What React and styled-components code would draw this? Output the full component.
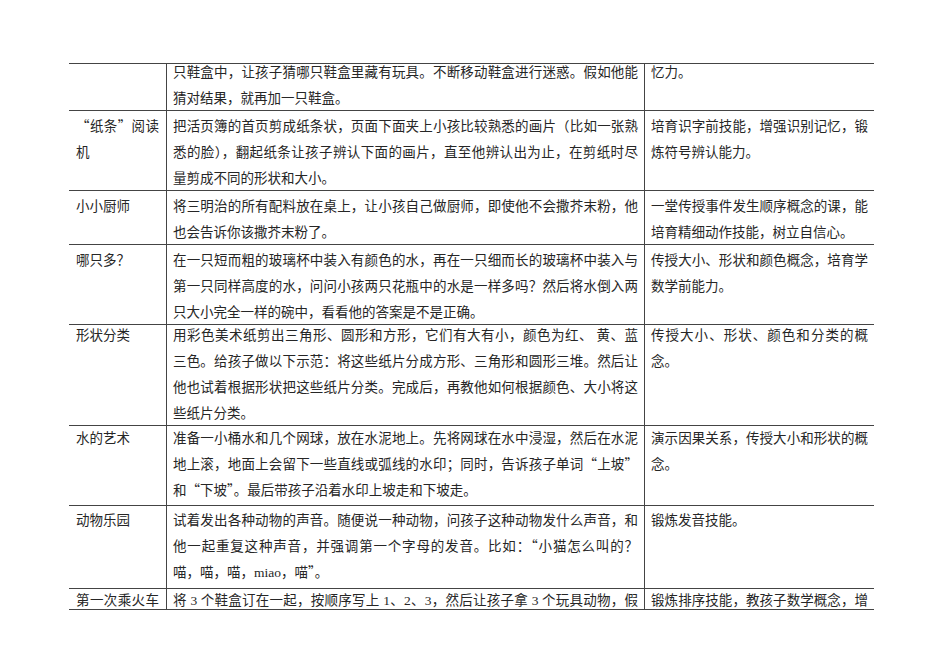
import React from 'react';
import styled, { createGlobalStyle } from 'styled-components';

const GlobalStyle = createGlobalStyle`
  html, body {
    margin: 0;
    padding: 0;
    background: #ffffff;
  }
  body {
    font-family: "Noto Sans CJK SC", "Liberation Serif", sans-serif;
    color: #262626;
  }
`;

const Page = styled.div`
  width: 950px;
  height: 672px;
  box-sizing: border-box;
  padding: 63px 0 0 69px;
  overflow: hidden;
  background: #fff;
`;

const Table = styled.div`
  width: 805px;
  border-top: 1px solid #444;
`;

const Row = styled.div`
  display: grid;
  grid-template-columns: 97px 478px 230px;
  border-bottom: 1px solid #444;
`;

const Cell = styled.div`
  box-sizing: border-box;
  padding: 0 ${(p) => (p.$first ? 7 : 6)}px;
  border-left: ${(p) => (p.$first ? 'none' : '1px solid #444')};
  font-size: 13.5px;
  line-height: 26px;
  min-width: 0;
`;

const Text = styled.div`
  margin-top: ${(p) => p.$shift}px;
  margin-bottom: ${(p) => p.$tail}px;
`;

const Line = styled.div`
  text-align: justify;
  text-align-last: ${(p) => (p.$full ? 'justify' : 'left')};
`;

// latin runs are set in Times in the original document
const Lat = styled.span`
  font-family: "Liberation Serif", serif;
`;

const rows = [
  {
    shift: -6,
    name: [],
    method: [
      '只鞋盒中，让孩子猜哪只鞋盒里藏有玩具。不断移动鞋盒进行迷惑。假如他能',
      '猜对结果，就再加一只鞋盒。',
    ],
    aim: ['忆力。'],
  },
  {
    shift: 1,
    name: ['“纸条”阅读', '机'],
    method: [
      '把活页簿的首页剪成纸条状，页面下面夹上小孩比较熟悉的画片（比如一张熟',
      '悉的脸），翻起纸条让孩子辨认下面的画片，直至他辨认出为止，在剪纸时尽',
      '量剪成不同的形状和大小。',
    ],
    aim: ['培育识字前技能，增强识别记忆，锻', '炼符号辨认能力。'],
  },
  {
    shift: 1,
    name: ['小小厨师'],
    method: [
      '将三明治的所有配料放在桌上，让小孩自己做厨师，即使他不会撒芥末粉，他',
      '也会告诉你该撒芥末粉了。',
    ],
    aim: ['一堂传授事件发生顺序概念的课，能', '培育精细动作技能，树立自信心。'],
  },
  {
    shift: 1,
    name: ['哪只多？'],
    method: [
      '在一只短而粗的玻璃杯中装入有颜色的水，再在一只细而长的玻璃杯中装入与',
      '第一只同样高度的水，问问小孩两只花瓶中的水是一样多吗？然后将水倒入两',
      '只大小完全一样的碗中，看看他的答案是不是正确。',
    ],
    aim: ['传授大小、形状和颜色概念，培育学', '数学前能力。'],
  },
  {
    shift: -4,
    name: ['形状分类'],
    method: [
      '用彩色美术纸剪出三角形、圆形和方形，它们有大有小，颜色为红、 黄、蓝',
      '三色。给孩子做以下示范：将这些纸片分成方形、三角形和圆形三堆。然后让',
      '他也试着根据形状把这些纸片分类。完成后，再教他如何根据颜色、大小将这',
      '些纸片分类。',
    ],
    aim: ['传授大小、形状、颜色和分类的概', '念。'],
  },
  {
    shift: -2,
    tail: 3,
    name: ['水的艺术'],
    method: [
      '准备一小桶水和几个网球，放在水泥地上。先将网球在水中浸湿，然后在水泥',
      '地上滚，地面上会留下一些直线或弧线的水印；同时，告诉孩子单词“上坡”',
      '和“下坡”。最后带孩子沿着水印上坡走和下坡走。',
    ],
    aim: ['演示因果关系，传授大小和形状的概', '念。'],
  },
  {
    shift: 0,
    tail: 2,
    name: ['动物乐园'],
    method: [
      '试着发出各种动物的声音。随便说一种动物，问孩子这种动物发什么声音，和',
      '他一起重复这种声音，并强调第一个字母的发音。比如：“小猫怎么叫的？',
      <>喵，喵，喵，<Lat>miao</Lat>，喵”。</>,
    ],
    aim: ['锻炼发音技能。'],
  },
  {
    // last row runs on to the next page, only its first line shows
    shift: -3,
    tail: -5,
    wrapAll: true,
    name: ['第一次乘火车'],
    method: [
      <>
        将<Lat> 3 </Lat>个鞋盒订在一起，按顺序写上<Lat> 1</Lat>、<Lat>2</Lat>、<Lat>3</Lat>，然后让孩子拿<Lat> 3 </Lat>个玩具动物，假
      </>,
    ],
    aim: ['锻炼排序技能，教孩子数学概念，增'],
  },
];

const Lines = ({ lines, shift, tail = 0, wrapAll }) => (
  <Text $shift={shift} $tail={tail}>
    {lines.map((l, i) => (
      <Line key={i} $full={wrapAll || (lines.length > 1 && i < lines.length - 1)}>
        {l}
      </Line>
    ))}
  </Text>
);

const App = () => (
  <Page>
    <GlobalStyle />
    <Table>
      {rows.map((r, i) => (
        <Row key={i}>
          <Cell $first>
            <Lines lines={r.name} shift={r.shift} tail={r.tail} wrapAll={r.wrapAll} />
          </Cell>
          <Cell>
            <Lines lines={r.method} shift={r.shift} tail={r.tail} wrapAll={r.wrapAll} />
          </Cell>
          <Cell>
            <Lines lines={r.aim} shift={r.shift} tail={r.tail} wrapAll={r.wrapAll} />
          </Cell>
        </Row>
      ))}
    </Table>
  </Page>
);

export default App;
